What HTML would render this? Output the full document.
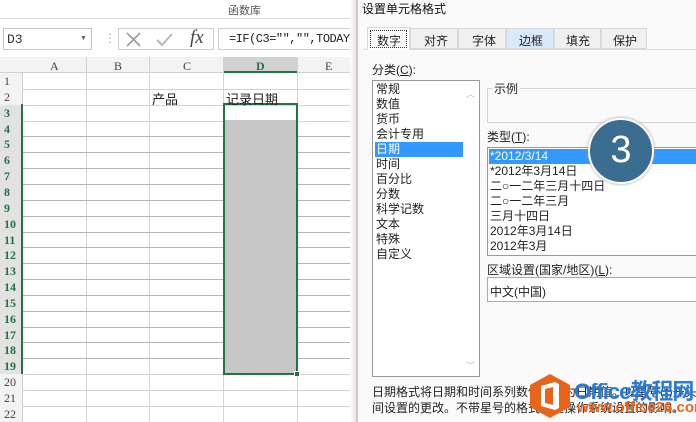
<!DOCTYPE html>
<html><head><meta charset="utf-8"><style>
*{margin:0;padding:0;box-sizing:border-box}
body{width:696px;height:422px;overflow:hidden;background:#fff;position:relative;font-family:"Liberation Sans","Noto Sans CJK SC",sans-serif;font-size:12px;color:#222}
.a{position:absolute}
.serif{font-family:"Liberation Serif","Noto Serif CJK SC",serif}
.hl{position:absolute;height:1px;background:#d4d4d4}
.vl{position:absolute;width:1px;background:#d4d4d4}
.rn{position:absolute;left:0;width:23px;text-align:left;padding-left:4px;font-size:12px;font-family:"Liberation Serif",serif;color:#444;line-height:16px}
.rn.s{color:#217346;font-weight:bold;background:#e2e2e2}
.li{position:absolute;left:3px;line-height:15px;font-size:12px}
.ti{position:absolute;left:2px;line-height:15px;font-size:12px}
#wrap{position:absolute;left:0;top:0;width:696px;height:422px;overflow:hidden}
</style></head><body><div id="wrap">
<div class="a" style="left:0;top:0;width:356px;height:19px;background:#fff;border-bottom:1px solid #dadada"></div>
<div class="a" style="left:228px;top:2px;font-size:11px;color:#555">函数库</div>
<div class="a" style="left:3px;top:28px;width:89px;height:22px;border:1px solid #c6c6c6"></div>
<div class="a" style="left:7px;top:32px;font-size:13px;color:#333;font-family:'Liberation Mono',monospace">D3</div>
<div class="a" style="left:80px;top:35px;font-size:7px;color:#666">▼</div>
<div class="a" style="left:104px;top:31px;color:#aaa;font-size:12px">⋮</div>
<div class="a" style="left:118px;top:28px;width:96px;height:22px;border:1px solid #d0d0d0"></div>
<svg class="a" style="left:124px;top:31px" width="80" height="17" viewBox="0 0 80 17"><path d="M3 2 L16 15 M16 2 L3 15" stroke="#9a9a9a" stroke-width="1.6" fill="none"/><path d="M33 9 L38 14 L48 3" stroke="#b8b8b8" stroke-width="2" fill="none"/></svg>
<div class="a serif" style="left:190px;top:27px;font-size:19px;font-style:italic;color:#444">fx</div>
<div class="a" style="left:218px;top:28px;width:140px;height:22px;border:1px solid #d0d0d0;border-right:none"></div>
<div class="a" style="left:229px;top:32px;font-size:12px;color:#222;white-space:nowrap;font-family:'Liberation Mono','Noto Sans CJK SC',monospace;letter-spacing:-0.5px">=IF(C3="","",TODAY</div>
<div class="a" style="left:0;top:57px;width:356px;height:16px;background:#f3f3f3;border-bottom:1px solid #d0d0d0"></div>
<div class="a" style="left:223px;top:57px;width:74px;height:16px;background:#d2d2d2;border-bottom:2px solid #217346"></div>
<div class="a serif" style="left:50px;top:59px;color:#444">A</div>
<div class="a serif" style="left:114px;top:59px;color:#444">B</div>
<div class="a serif" style="left:183px;top:59px;color:#444">C</div>
<div class="a serif" style="left:256px;top:59px;color:#217346;font-weight:bold">D</div>
<div class="a serif" style="left:325px;top:59px;color:#444">E</div>
<div class="a" style="left:0;top:73px;width:23px;height:349px;background:#f3f3f3;border-right:1px solid #d0d0d0"></div>
<div class="vl" style="left:86px;top:57px;height:365px"></div>
<div class="vl" style="left:149px;top:57px;height:365px"></div>
<div class="vl" style="left:223px;top:57px;height:365px"></div>
<div class="vl" style="left:297px;top:57px;height:365px"></div>
<div id="rows"></div>
<div class="a" style="left:21px;top:104px;width:2px;height:270px;background:#217346"></div>
<div class="a" style="left:224px;top:120px;width:72px;height:254px;background:#c6c6c6"></div>
<div class="a" style="left:223px;top:103px;width:75px;height:272px;border:2px solid #217346"></div>
<div class="a" style="left:294px;top:371px;width:6px;height:6px;background:#217346;border:1px solid #fff"></div>
<div class="a" style="left:152px;top:89px;font-size:13px">产品</div>
<div class="a" style="left:226px;top:89px;font-size:13px">记录日期</div>
<div class="a" style="left:350px;top:0;width:8px;height:422px;background:linear-gradient(90deg,#fff,#ddd)"></div>
<div class="a" style="left:356px;top:0;width:2px;height:422px;background:#d9c4c4"></div>
<div class="a" style="left:358px;top:0;width:338px;height:422px;background:#fafafa"></div>
<div class="a" style="left:362px;top:0;font-size:12px;color:#111">设置单元格格式</div>
<div class="a" style="left:363px;top:49px;width:333px;height:1px;background:#d9d9d9"></div>
<div class="a" style="left:367px;top:27px;width:43px;height:23px;background:#fff;border:1px solid #d9d9d9;border-bottom:none"></div>
<div class="a" style="left:370px;top:30px;width:37px;height:18px;border:1px dotted #333"></div>
<div class="a" style="left:377px;top:32px">数字</div>
<div class="a" style="left:410px;top:28px;width:48px;height:21px;border:1px solid #d9d9d9;background:#f0f0f0"></div>
<div class="a" style="left:424px;top:32px">对齐</div>
<div class="a" style="left:458px;top:28px;width:48px;height:21px;border:1px solid #d9d9d9;background:#f0f0f0"></div>
<div class="a" style="left:472px;top:32px">字体</div>
<div class="a" style="left:506px;top:28px;width:48px;height:21px;border:1px solid #d9d9d9;background:#d8eaf9"></div>
<div class="a" style="left:519px;top:32px">边框</div>
<div class="a" style="left:554px;top:28px;width:47px;height:21px;border:1px solid #d9d9d9;background:#f0f0f0"></div>
<div class="a" style="left:566px;top:32px">填充</div>
<div class="a" style="left:601px;top:28px;width:46px;height:21px;border:1px solid #d9d9d9;background:#f0f0f0"></div>
<div class="a" style="left:613px;top:32px">保护</div>
<div class="a" style="left:372px;top:61px">分类(<u>C</u>):</div>
<div class="a" style="left:372px;top:80px;width:108px;height:297px;background:#fff;border:1px solid #9a9a9a">
<div class="a" style="left:2px;top:61px;width:88px;height:15px;background:#3399ff"></div>
<div class="li" style="top:1px">常规</div><div class="li" style="top:16px">数值</div><div class="li" style="top:31px">货币</div><div class="li" style="top:46px">会计专用</div><div class="li" style="top:61px;color:#fff">日期</div><div class="li" style="top:76px">时间</div><div class="li" style="top:91px">百分比</div><div class="li" style="top:106px">分数</div><div class="li" style="top:121px">科学记数</div><div class="li" style="top:136px">文本</div><div class="li" style="top:151px">特殊</div><div class="li" style="top:166px">自定义</div>
<div class="a" style="left:93px;top:6px;color:#bbb;font-size:9px">︿</div>
<div class="a" style="left:93px;top:278px;color:#bbb;font-size:9px">﹀</div>
</div>
<div class="a" style="left:487px;top:88px;width:209px;height:35px;border:1px solid #d5d5d5;border-right:none"></div>
<div class="a" style="left:492px;top:80px;background:#fafafa;padding:0 2px">示例</div>
<div class="a" style="left:487px;top:128px">类型(<u>T</u>):</div>
<div class="a" style="left:487px;top:147px;width:209px;height:109px;background:#fff;border:1px solid #9a9a9a;border-right:none">
<div class="a" style="left:1px;top:1px;width:208px;height:15px;background:#3399ff"></div>
<div class="ti" style="top:1px;color:#fff">*2012/3/14</div><div class="ti" style="top:16px">*2012年3月14日</div><div class="ti" style="top:31px">二○一二年三月十四日</div><div class="ti" style="top:46px">二○一二年三月</div><div class="ti" style="top:61px">三月十四日</div><div class="ti" style="top:76px">2012年3月14日</div><div class="ti" style="top:91px">2012年3月</div>
</div>
<div class="a" style="left:588px;top:118px;width:66px;height:66px;border-radius:50%;background:#3b6d90;border:2px solid #fff;box-shadow:0 0 3px #999;color:#fff;font-size:38px;text-align:center;line-height:60px">3</div>
<div class="a" style="left:487px;top:261px">区域设置(国家/地区)(<u>L</u>):</div>
<div class="a" style="left:487px;top:277px;width:209px;height:25px;background:#fff;border:1px solid #aaa;border-right:none"></div>
<div class="a" style="left:490px;top:283px">中文(中国)</div>
<div class="a" style="left:372px;top:383px;white-space:nowrap">日期格式将日期和时间系列数值显示为日期值。以星号(*)开头的日期格</div>
<div class="a" style="left:372px;top:399px;white-space:nowrap">间设置的更改。不带星号的格式不受操作系统设置的影响。</div>
<svg class="a" style="left:528px;top:373px" width="44" height="46" viewBox="0 0 44 46"><polygon points="22,1 42,12 42,34 22,45 2,34 2,12" fill="#e8641b"/><path d="M13 13 L27 9 L31 11 V35 L27 37 L13 33Z M17 16 V30 L25 32 V14Z" fill="#fff"/></svg>
<div class="a" style="left:574px;top:374px;font-size:22px;font-weight:bold;color:#2b7bd3;white-space:nowrap;letter-spacing:-1px">Office教程网</div>
<div class="a" style="left:577px;top:399px;font-size:15px;font-weight:bold;color:#e8641b;white-space:nowrap">www.office26.com</div>
</div>
<script>
var h='';for(var i=1;i<=22;i++){var t=73+(i-1)*15.85;var s=(i>=3&&i<=19)?' s':'';h+='<div class="rn'+s+'" style="top:'+t+'px;height:16px">'+i+'</div><div class="hl" style="left:23px;top:'+(t+15.85)+'px;width:333px;'+((i>=4&&i<=18)?'background:#b4b4b4;':'')+'"></div>';}
document.getElementById('rows').innerHTML=h;
</script>
</body></html>
